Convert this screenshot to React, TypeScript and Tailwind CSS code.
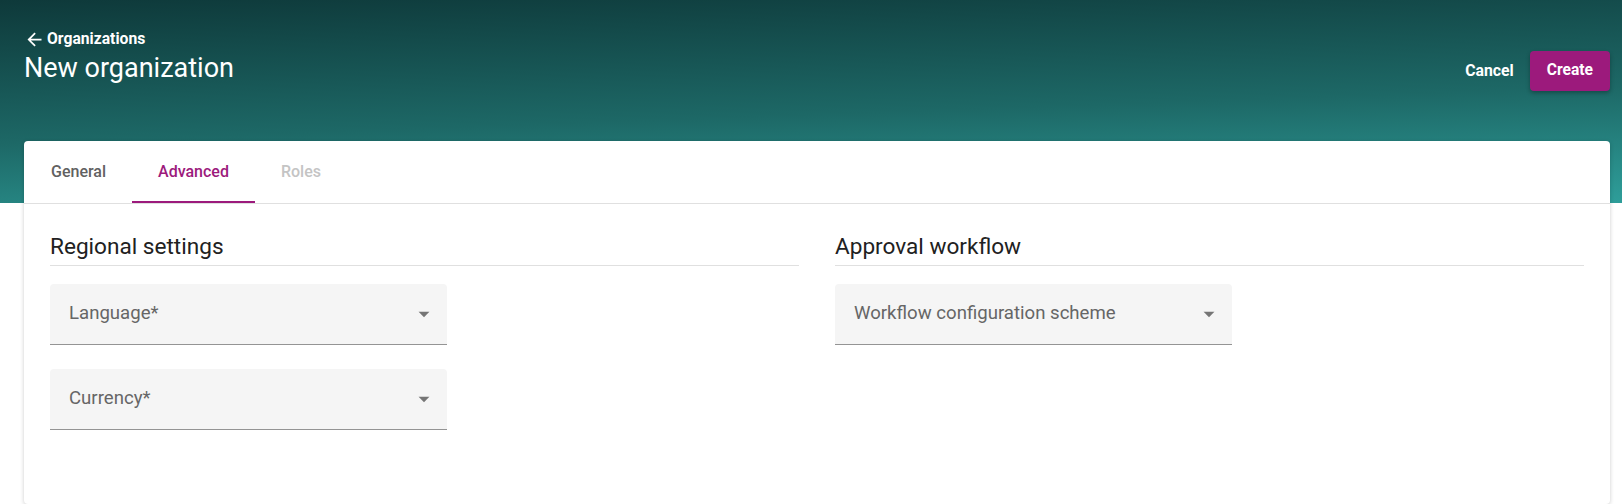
import { useState } from "react";

const tabs = ["General", "Advanced", "Roles"];

function ArrowBackIcon() {
  return (
    <svg className="w-[21px] h-[21px]" viewBox="0 0 24 24" fill="currentColor">
      <path d="M20 11H7.83l5.59-5.59L12 4l-8 8 8 8 1.41-1.41L7.83 13H20v-2z" />
    </svg>
  );
}

function DropDownIcon() {
  return (
    <svg className="w-[26px] h-[26px] text-[#757575]" viewBox="0 0 24 24" fill="currentColor">
      <path d="M7 10l5 5 5-5z" />
    </svg>
  );
}

function SelectField({ label }: { label: string }) {
  return (
    <div className="flex items-center justify-between w-[397px] h-[61px] pl-[19px] pr-[10px] bg-[#f5f5f5] rounded-t-[4px] border-b border-[#949494] cursor-pointer">
      <span className="text-[18.6px] text-[#666666]">{label}</span>
      <DropDownIcon />
    </div>
  );
}

function Section({ title, children }: { title: string; children: React.ReactNode }) {
  return (
    <div>
      <h2 className="text-[22.6px] leading-[30px] text-[#212121] pb-[3px] border-b border-[#e0e0e0]">{title}</h2>
      <div className="flex flex-col gap-[24px] mt-[18px]">{children}</div>
    </div>
  );
}

export default function App() {
  const [active, setActive] = useState(1);

  return (
    <div className="min-h-[504px] bg-white font-['Roboto','Liberation_Sans',sans-serif]">
      <header className="h-[203px] bg-[linear-gradient(178deg,#0e393a_0%,#1d6866_55%,#2e9e9a_100%)] pl-6 pr-3 pt-[29px]">
        <div className="flex items-start justify-between">
          <div className="text-white">
            <a href="#" className="flex items-center gap-[2px] h-5 text-[15.7px] font-bold leading-5">
              <ArrowBackIcon />
              Organizations
            </a>
            <h1 className="mt-[3px] text-[27px] leading-[32px]">New organization</h1>
          </div>
          <div className="flex items-center mt-[22px]">
            <button className="mr-2 px-2 h-10 text-[15.8px] font-bold text-white">Cancel</button>
            <button className="h-10 px-[17px] rounded-[4px] bg-[#9c1a7c] text-[15.6px] font-bold text-white shadow-[0_2px_4px_rgba(0,0,0,0.3)]">
              Create
            </button>
          </div>
        </div>
      </header>

      <main className="-mt-[62px] ml-6 mr-3 min-h-[363px] bg-white rounded-[4px] shadow-[0_1px_4px_rgba(0,0,0,0.2)]">
        <div className="flex h-[63px] border-b border-[#e0e0e0]">
          {tabs.map((tab, i) => (
            <button
              key={tab}
              onClick={() => i < 2 && setActive(i)}
              className={`h-full px-[26px] pt-[2px] text-[16px] font-medium border-b-2 ${
                i === active
                  ? "text-[#9c1a7c] border-[#9c1a7c]"
                  : i === 2
                  ? "text-[#c4c4c4] border-transparent"
                  : "text-[#616161] border-transparent"
              } ${i === 0 ? "pl-[27px]" : ""}`}
            >
              {tab}
            </button>
          ))}
        </div>

        <div className="grid grid-cols-2 gap-[36px] px-[26px] pt-[28px]">
          <Section title="Regional settings">
            <SelectField label="Language*" />
            <SelectField label="Currency*" />
          </Section>
          <Section title="Approval workflow">
            <SelectField label="Workflow configuration scheme" />
          </Section>
        </div>
      </main>
    </div>
  );
}
